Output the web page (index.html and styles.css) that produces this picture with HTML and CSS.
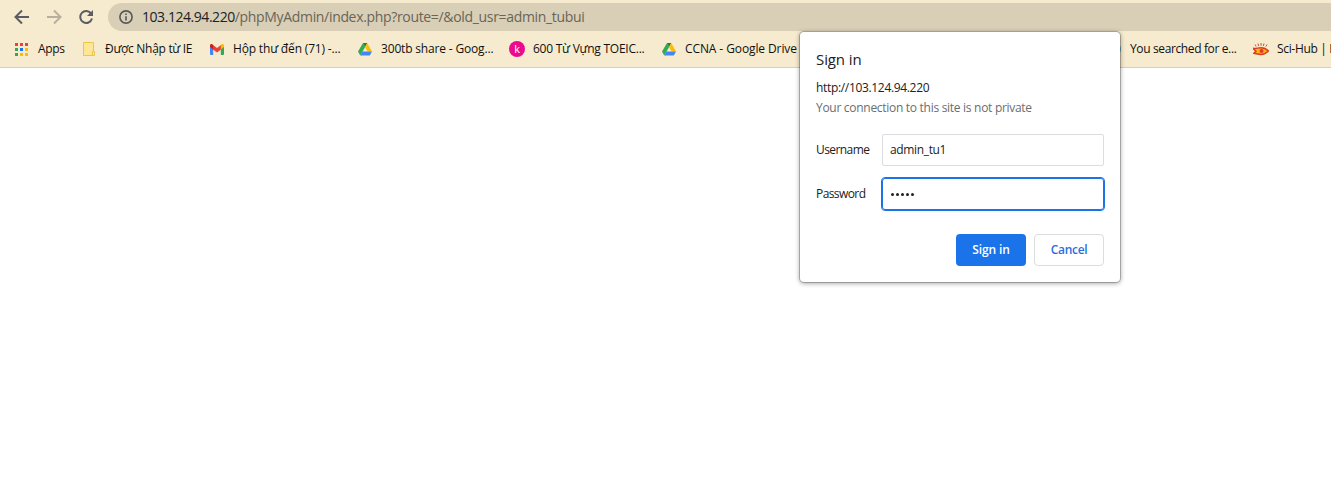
FILE: index.html
```html
<!DOCTYPE html>
<html lang="en">
<head>
<meta charset="utf-8">
<title>Sign in</title>
<link rel="stylesheet" href="styles.css">
</head>
<body>
<svg class="defs" aria-hidden="true">
  <symbol id="drive" viewBox="0 0 14 13">
    <path fill="#34a853" d="M5 0 0 8.6l2.2 4L7 4.3z"/>
    <path fill="#188038" d="M5 0h4.2L7 4.3z"/>
    <path fill="#fbbc04" d="M9.2 0 14 8.6H9.7L7 4.3z"/>
    <path fill="#4285f4" d="M4.4 8.6H14l-2.2 4H2.2z"/>
  </symbol>
</svg>
<header class="chrome">
  <div class="toolbar">
    <svg class="nav" viewBox="0 0 16 16"><path d="M15 8H2M8 1.5 1.5 8 8 14.5"/></svg>
    <svg class="nav nav-off" viewBox="0 0 16 16"><path d="M1 8h13M8 1.5 14.5 8 8 14.5"/></svg>
    <svg class="nav" viewBox="0 0 16 16"><path d="M13.2 4.6A6 6 0 1 0 14 9.6"/><path class="solid" d="M15 1v6H9z"/></svg>
    <div class="omnibox">
      <svg class="info" viewBox="0 0 14 14"><circle cx="7" cy="7" r="6.1"/><path d="M7 6.2v4.2M7 3.5v1.6"/></svg>
      <span class="url"><b>103.124.94.220</b>/phpMyAdmin/index.php?route=/&amp;old_usr=admin_tubui</span>
    </div>
  </div>
  <nav class="bookmarks">
    <a class="bm bm-apps"><svg width="13" height="13" viewBox="0 0 13 13"><path fill="#ea4335" d="M0 0h3v3H0zM5 0h3v3H5zM10 0h3v3h-3z"/><path fill="#34a853" d="M0 5h3v3H0zM0 10h3v3H0z"/><path fill="#1a73e8" d="M5 5h3v3H5z"/><path fill="#fbbc04" d="M10 5h3v3h-3zM5 10h3v3H5zM10 10h3v3h-3z"/></svg><span>Apps</span></a>
    <a class="bm bm-folder"><svg width="12" height="14" viewBox="0 0 12 14"><path fill="#ffe694" stroke="#e8c648" d="M.5.5h10v9h1v4H.5zM9.5 13.5v-4h1"/></svg><span>Được Nhập từ IE</span></a>
    <a class="bm bm-mail"><svg width="14" height="11" viewBox="0 0 14 11"><path fill="#4285f4" d="M0 2l3.2 2v7H1a1 1 0 0 1-1-1z"/><path fill="#34a853" d="M14 2l-3.2 2v7H13a1 1 0 0 0 1-1z"/><path fill="#ea4335" d="M3 1v4.4l4 3 4-3V1L7 4z"/><path fill="#c5221f" d="M0 1.6C0 .2 1.6-.4 2.6.6l.6.5v4.3L0 3z"/><path fill="#fbbc04" d="M14 1.6c0-1.4-1.6-2-2.6-1l-.6.5v4.3L14 3z"/></svg><span>Hộp thư đến (71) -...</span></a>
    <a class="bm bm-share"><svg width="14" height="13"><use href="#drive"/></svg><span>300tb share - Goog...</span></a>
    <a class="bm bm-toeic"><i class="badge">k</i><span>600 Từ Vựng TOEIC...</span></a>
    <a class="bm bm-ccna"><svg width="14" height="13"><use href="#drive"/></svg><span>CCNA - Google Drive</span></a>
    <a class="bm bm-search"><svg width="16" height="16" viewBox="0 0 16 16"><circle cx="8" cy="8" r="7.9" fill="#4aa3d0"/></svg><span>You searched for e...</span></a>
    <a class="bm bm-sci"><svg width="16" height="13" viewBox="0 0 16 13"><path fill="none" stroke="#dc4a32" d="M3.200 3.500 2 1.500M5.700 3 5 .5M8 2.800V0M10.300 3l.7-2.500M12.800 3.500 14 1.500"/><path fill="#fbb51b" stroke="#dc3c22" stroke-width="1.500" d="M0 5.200C3 6 4.500 4.700 8 4.700c3.500 0 5.500 1.300 7.500 3.300C13 10.500 11 11.500 8 11.500S3 10.500 .8 10.300L3 8.500z"/><circle cx="8.500" cy="8" r="2" fill="#dc3c22"/></svg><span>Sci-Hub | D</span></a>
  </nav>
</header>
<form class="dialog">
  <h1>Sign in</h1>
  <p class="origin">http://103.124.94.220</p>
  <p class="notice">Your connection to this site is not private</p>
  <div class="field"><label>Username</label><div class="input user">admin_tu1</div></div>
  <div class="field"><label class="pw">Password</label><div class="input focused"><i class="dot"></i><i class="dot"></i><i class="dot"></i><i class="dot"></i><i class="dot"></i></div></div>
  <div class="actions"><button type="button" class="primary">Sign in</button><button type="button" class="cancel">Cancel</button></div>
</form>
</body>
</html>
```
FILE: styles.css
```css
* { box-sizing: border-box; }
body { margin: 0; height: 489px; overflow: hidden; background: #fff; color: #202124; font: 12px/16px "Open Sans", "Noto Sans", sans-serif; }
.defs { position: absolute; width: 0; height: 0; }
.chrome { height: 68px; overflow: hidden; background: #f6ebce; border-bottom: 1px solid #d9cfb8; }
.toolbar { display: flex; align-items: center; height: 31px; padding: 3px 0 0 14px; }
.nav { flex: none; width: 16px; height: 16px; margin-right: 16px; fill: none; stroke: #5a5d61; stroke-width: 2; }
.nav-off { stroke: #b8b09e; }
.nav + .omnibox { margin-left: -2px; }
.nav .solid { fill: #5a5d61; stroke: none; }
.omnibox { display: flex; align-items: center; flex: 1; height: 28px; padding-left: 11px; background: #d9ceb6; border-radius: 14px 0 0 14px; }
.info { width: 14px; height: 14px; margin-right: 9px; fill: none; stroke: #56585b; stroke-width: 1.6; }
.url { color: #696557; font-size: 14px; letter-spacing: -.33px; white-space: nowrap; }
.url b { font-weight: 400; color: #202124; letter-spacing: -.45px; }
.bookmarks { display: flex; align-items: center; height: 36px; padding-left: 15px; color: #111; }
.bm { display: flex; align-items: center; flex: none; white-space: nowrap; letter-spacing: -.3px; }
.bm svg { flex: none; margin-right: 9px; }
.bm-apps { width: 68px; }
.bm-apps svg, .bm-folder svg { margin-right: 10px; }
.bm-folder { width: 127px; }
.bm-mail { width: 148px; letter-spacing: -.17px; }
.bm-share { width: 151px; letter-spacing: -.17px; }
.bm-toeic { width: 153px; letter-spacing: -.25px; }
.bm-ccna { width: 443px; letter-spacing: -.1px; }
.bm-search { width: 148px; letter-spacing: -.37px; }
.bm-search svg { margin-right: 9px; }
.bm-sci { letter-spacing: -.33px; }
.bm-sci svg { margin-right: 8px; }
.badge { flex: none; width: 16px; height: 16px; margin-right: 8px; border-radius: 50%; background: #ec0a8c; color: #fff; font: 11px/15px "Open Sans", sans-serif; text-align: center; }
.dialog { position: absolute; left: 800px; top: 32px; width: 320px; height: 250px; padding: 17px 16px 16px; background: #fff; border-radius: 4px; box-shadow: 0 0 0 1px rgba(0,0,0,.22), 0 1px 4px 1px rgba(0,0,0,.3); }
h1 { margin: 0; font-size: 15px; font-weight: 400; line-height: 20px; letter-spacing: -.1px; }
p { margin: 0; white-space: nowrap; }
.origin { margin-top: 11px; letter-spacing: -.33px; }
.notice { margin: 4px 0 18px; color: #6a6d71; letter-spacing: -.29px; }
.field { display: flex; align-items: center; height: 32px; margin-bottom: 12px; }
.field label { width: 66px; letter-spacing: -.58px; }
.input { display: flex; align-items: center; width: 222px; height: 32px; padding-left: 7px; border: 1px solid #dadce0; border-radius: 2px; letter-spacing: -.35px; }
.focused { border-color: #1a73e8; outline: 1px solid #1a73e8; outline-offset: 0; border-radius: 3px; gap: 2px; padding-left: 8px; }
.dot { width: 3px; height: 3px; border-radius: 50%; background: #202124; }
.actions { display: flex; justify-content: flex-end; gap: 8px; margin-top: 24px; }
button { width: 70px; height: 32px; padding: 0; border-radius: 4px; font: 600 12px/16px "Open Sans", sans-serif; letter-spacing: -.3px; }
.primary { border: 0; color: #fff; background: #1a73e8; letter-spacing: -.1px; }
.cancel { border: 1px solid #dadce0; color: #2b6de0; background: #fff; }
```
